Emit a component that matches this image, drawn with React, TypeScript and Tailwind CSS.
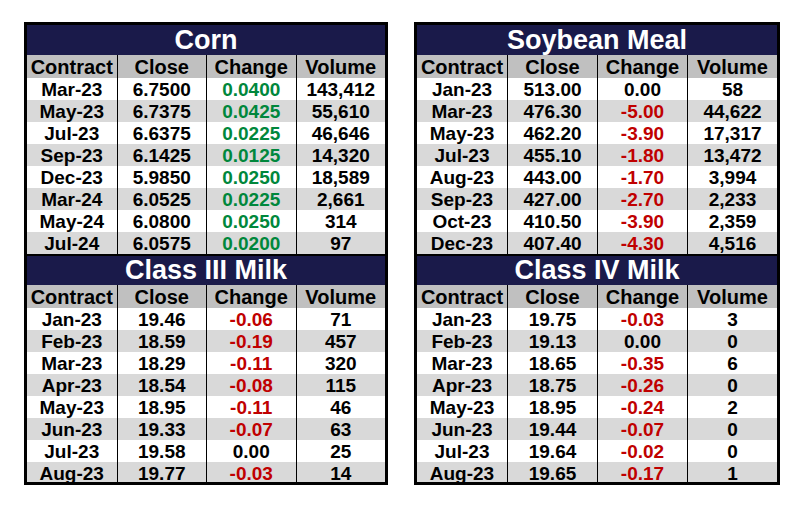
import React from "react";

type Row = [string, string, string, string];
type Table = { title: string; rows: Row[]; up?: boolean };

const corn: Table = {
  title: "Corn",
  up: true,
  rows: [
    ["Mar-23", "6.7500", "0.0400", "143,412"],
    ["May-23", "6.7375", "0.0425", "55,610"],
    ["Jul-23", "6.6375", "0.0225", "46,646"],
    ["Sep-23", "6.1425", "0.0125", "14,320"],
    ["Dec-23", "5.9850", "0.0250", "18,589"],
    ["Mar-24", "6.0525", "0.0225", "2,661"],
    ["May-24", "6.0800", "0.0250", "314"],
    ["Jul-24", "6.0575", "0.0200", "97"],
  ],
};
const soy: Table = {
  title: "Soybean Meal",
  rows: [
    ["Jan-23", "513.00", "0.00", "58"],
    ["Mar-23", "476.30", "-5.00", "44,622"],
    ["May-23", "462.20", "-3.90", "17,317"],
    ["Jul-23", "455.10", "-1.80", "13,472"],
    ["Aug-23", "443.00", "-1.70", "3,994"],
    ["Sep-23", "427.00", "-2.70", "2,233"],
    ["Oct-23", "410.50", "-3.90", "2,359"],
    ["Dec-23", "407.40", "-4.30", "4,516"],
  ],
};
const milk3: Table = {
  title: "Class III Milk",
  rows: [
    ["Jan-23", "19.46", "-0.06", "71"],
    ["Feb-23", "18.59", "-0.19", "457"],
    ["Mar-23", "18.29", "-0.11", "320"],
    ["Apr-23", "18.54", "-0.08", "115"],
    ["May-23", "18.95", "-0.11", "46"],
    ["Jun-23", "19.33", "-0.07", "63"],
    ["Jul-23", "19.58", "0.00", "25"],
    ["Aug-23", "19.77", "-0.03", "14"],
  ],
};
const milk4: Table = {
  title: "Class IV Milk",
  rows: [
    ["Jan-23", "19.75", "-0.03", "3"],
    ["Feb-23", "19.13", "0.00", "0"],
    ["Mar-23", "18.65", "-0.35", "6"],
    ["Apr-23", "18.75", "-0.26", "0"],
    ["May-23", "18.95", "-0.24", "2"],
    ["Jun-23", "19.44", "-0.07", "0"],
    ["Jul-23", "19.64", "-0.02", "0"],
    ["Aug-23", "19.65", "-0.17", "1"],
  ],
};

function changeColor(v: string, up?: boolean) {
  if (up) return "text-[#00873c]";
  if (v.startsWith("-")) return "text-[#c00000]";
  return "text-black";
}

function Section({ t, first }: { t: Table; first?: boolean }) {
  return (
    <div className="flex flex-col">
      <div
        className={`${first ? "h-[30px]" : "h-[31px] border-t-2 border-black"} bg-[#1a1a4a] text-white text-[27px] font-bold flex items-center justify-center leading-none`}
      >
        {t.title}
      </div>
      <div className="grid grid-cols-4 h-[23px] bg-[#c0c0c0] text-[20px] font-bold leading-none">
        {["Contract", "Close", "Change", "Volume"].map((h, i) => (
          <div
            key={h}
            className={`flex items-center justify-center ${i > 0 ? "border-l border-black" : ""}`}
          >
            {h}
          </div>
        ))}
      </div>
      {t.rows.map((r, ri) => (
        <div
          key={ri}
          className={`grid grid-cols-4 h-[22px] text-[19px] font-bold leading-none ${ri % 2 === 1 ? "bg-[#d9d9d9]" : "bg-white"}`}
        >
          {r.map((c, ci) => (
            <div
              key={ci}
              className={`flex items-center justify-center ${ci > 0 ? "border-l border-black" : ""} ${ci === 2 ? changeColor(c, t.up) : "text-black"}`}
            >
              {c}
            </div>
          ))}
        </div>
      ))}
    </div>
  );
}

export default function App() {
  return (
    <div
      className="w-[805px] h-[509px] bg-white flex gap-[26px] pl-[24px] pt-[22px]"
      style={{ fontFamily: '"Liberation Sans", Arial, sans-serif' }}
    >
      <div className="w-[364px] h-[463px] border-[3px] border-black flex flex-col overflow-hidden">
        <Section t={corn} first />
        <Section t={milk3} />
      </div>
      <div className="w-[366px] h-[463px] border-[3px] border-black flex flex-col overflow-hidden">
        <Section t={soy} first />
        <Section t={milk4} />
      </div>
    </div>
  );
}
